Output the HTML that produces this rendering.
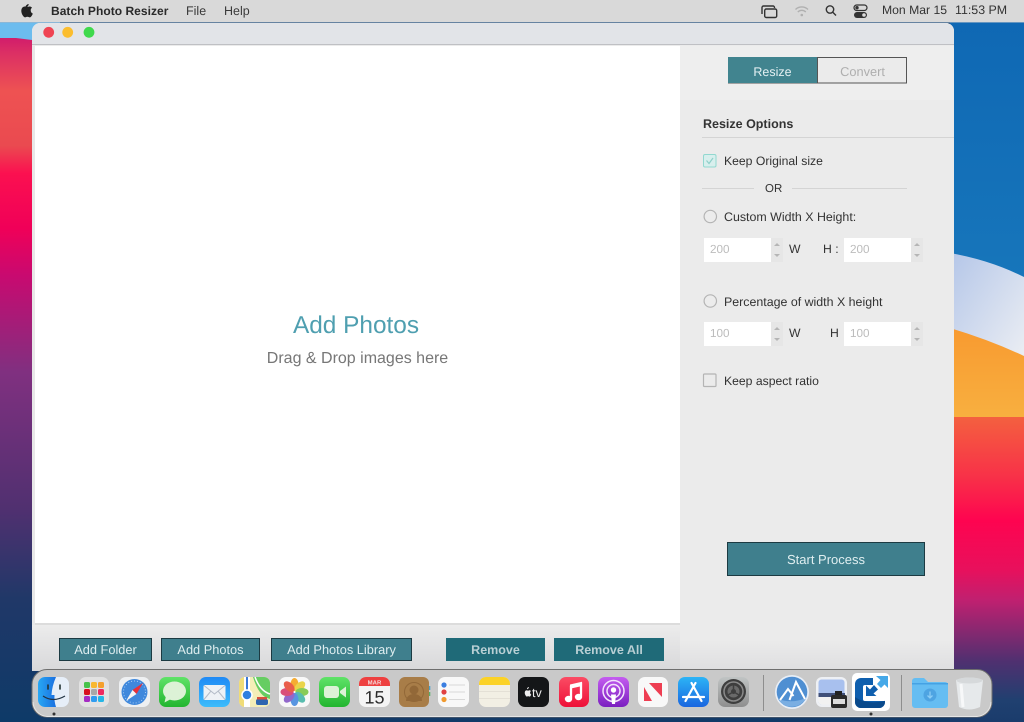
<!DOCTYPE html>
<html><head><meta charset="utf-8"><title>Batch Photo Resizer</title>
<style>
html,body{margin:0;padding:0;width:1024px;height:722px;overflow:hidden;background:#123a68}
body{position:relative;font-family:"Liberation Sans",sans-serif;color:#333;text-rendering:geometricPrecision}
#all{position:absolute;left:0;top:0;width:1024px;height:722px;filter:blur(.35px)}
.a{position:absolute}
.t{position:absolute;white-space:nowrap;font-size:12.2px;line-height:16px;color:#333}
.btn{position:absolute;box-sizing:border-box;background:#3f7f8d;border:1px solid #1c3a42;color:#dfeef0;font-size:12.8px;text-align:center;line-height:22px}
.rm{background:#1f6a78;border:1px solid #1f6a78;color:#b9cfd4;font-weight:bold;font-size:12.5px}
.inp{position:absolute;background:#fff;color:#bcbcbc;font-size:11.7px;line-height:23px;padding-left:6px;box-sizing:border-box;width:67px;height:24px}
.st{position:absolute;width:12px;height:24px;background:#e6e6e6}
.st:before,.st:after{content:"";position:absolute;left:3px;border-left:3px solid transparent;border-right:3px solid transparent}
.st:before{top:5px;border-bottom:3px solid #b5b5b5}
.st:after{bottom:5px;border-top:3px solid #b5b5b5}
.ln{position:absolute;height:1px;background:#d4d4d4}
</style></head><body><div id="all">

<svg class="a" style="left:0;top:0" width="1024" height="722" viewBox="0 0 1024 722">
<defs>
<linearGradient id="lw" x1="0" y1="0" x2="0" y2="1">
<stop offset="0" stop-color="#d01a6c"/><stop offset=".025" stop-color="#dc3064"/><stop offset=".08" stop-color="#ee5252"/><stop offset=".16" stop-color="#ea4a50"/><stop offset=".2" stop-color="#fb1050"/><stop offset=".28" stop-color="#f00058"/><stop offset=".35" stop-color="#c80a70"/><stop offset=".49" stop-color="#803080"/><stop offset=".69" stop-color="#503070"/><stop offset=".82" stop-color="#203868"/><stop offset="1" stop-color="#0e3a68"/>
</linearGradient>
<linearGradient id="rb" x1="0" y1="0" x2="0" y2="1"><stop offset="0" stop-color="#0f68b4"/><stop offset="1" stop-color="#1878bc"/></linearGradient>
<linearGradient id="rw" x1="0" y1="0" x2="1" y2="1"><stop offset="0" stop-color="#b4c6e8"/><stop offset="1" stop-color="#eef0f4"/></linearGradient>
<linearGradient id="ro" x1="0" y1="0" x2="0" y2="1"><stop offset="0" stop-color="#f89a30"/><stop offset="1" stop-color="#f8b040"/></linearGradient>
<linearGradient id="rr" x1="0" y1="0" x2="0" y2="1"><stop offset="0" stop-color="#f4603f"/><stop offset=".2" stop-color="#f83048"/><stop offset=".34" stop-color="#fe0450"/><stop offset=".5" stop-color="#e8105c"/><stop offset=".6" stop-color="#c02070"/><stop offset=".8" stop-color="#503070"/><stop offset=".93" stop-color="#204070"/><stop offset="1" stop-color="#1a3c6c"/></linearGradient>
<linearGradient id="fin" x1="0" y1="0" x2="1" y2="0"><stop offset="0" stop-color="#28a8f4"/><stop offset="1" stop-color="#1a6fe0"/></linearGradient>
<linearGradient id="mus" x1="0" y1="0" x2="0" y2="1"><stop offset="0" stop-color="#fb4c64"/><stop offset="1" stop-color="#ee1038"/></linearGradient>
<linearGradient id="pod" x1="0" y1="0" x2="0" y2="1"><stop offset="0" stop-color="#c45cf0"/><stop offset="1" stop-color="#7a1fc0"/></linearGradient>
<linearGradient id="gr" x1="0" y1="0" x2="0" y2="1"><stop offset="0" stop-color="#5fe368"/><stop offset="1" stop-color="#22b52f"/></linearGradient>
<linearGradient id="ml" x1="0" y1="0" x2="0" y2="1"><stop offset="0" stop-color="#1f8af5"/><stop offset="1" stop-color="#3cbcfb"/></linearGradient>
<linearGradient id="as" x1="0" y1="0" x2="0" y2="1"><stop offset="0" stop-color="#2cb4f6"/><stop offset="1" stop-color="#1a66e0"/></linearGradient>
<linearGradient id="bar" x1="0" y1="0" x2="0" y2="1"><stop offset="0" stop-color="#ececec"/><stop offset="1" stop-color="#d8d8da"/></linearGradient>
<linearGradient id="sb" x1="0" y1="0" x2="0" y2="1"><stop offset="0" stop-color="#ebebeb"/><stop offset="1" stop-color="#dedee0"/></linearGradient>
<linearGradient id="prf" x1="0" y1="0" x2="0" y2="1"><stop offset="0" stop-color="#c0c4c4"/><stop offset="1" stop-color="#8e8e8e"/></linearGradient>
</defs>
<!-- wallpaper -->
<rect width="1024" height="722" fill="#123a68"/>
<rect x="0" y="36" width="40" height="686" fill="url(#lw)"/>
<rect x="0" y="20" width="60" height="18" fill="#6cbcee"/>
<path d="M0 36 L32 40 V36Z" fill="#6cbcee"/>
<rect x="950" y="20" width="74" height="300" fill="url(#rb)"/>
<path d="M950 253Q990 260 1024 277V370L950 335Z" fill="url(#rw)"/>
<path d="M950 328Q990 340 1024 356V420H950Z" fill="url(#ro)"/>
<path d="M950 417H1024V722H950Z" fill="url(#rr)"/>

<!-- window -->
<path d="M32 671V31a8 8 0 0 1 8-8H946a8 8 0 0 1 8 8V671Z" fill="#ebebeb"/>
<path d="M32 44V31a8 8 0 0 1 8-8H946a8 8 0 0 1 8 8V44Z" fill="#e2e4e8"/>
<rect x="32" y="44" width="922" height="1" fill="#bfc0c4"/>
<rect x="32" y="45" width="3" height="580" fill="#e8e8e8"/>
<rect x="35" y="46" width="645" height="577" fill="#fff"/>
<rect x="35" y="623" width="645" height="2" fill="#dcdcdc"/>
<rect x="680" y="46" width="274" height="54" fill="#eeeeee"/>
<rect x="680" y="640" width="274" height="31" fill="url(#sb)"/>
<rect x="32" y="625" width="648" height="46" fill="url(#bar)"/>
<circle cx="48.700" cy="32.300" r="5.400" fill="#ef4453"/>
<circle cx="67.700" cy="32.300" r="5.400" fill="#fbbd2e"/>
<circle cx="89" cy="32.300" r="5.400" fill="#3fd94c"/>

<!-- menu bar -->
<rect width="1024" height="22" fill="#d9d9d9"/>
<rect y="22" width="1024" height="1" fill="#9fb4c8" opacity=".6"/>
<g transform="translate(6.800 .8) scale(.8)">
<path d="M25.800 7.400c.9-1 1.700-2.200 1.500-3.400-1.200.1-2.500.9-3.200 1.900-.6.8-1.100 2-.9 3.100 1.200.1 1.900-.6 2.600-1.600zM29.900 11.700c0-2 1.600-2.900 1.700-3-1-1.400-2.400-1.600-3-1.600-1.300-.1-2.300.7-3.100.7-.8 0-1.800-.7-2.900-.7-1.500 0-3 .9-3.700 2.200-1.600 2.800-.4 6.900 1.100 9.100.8 1.100 1.600 2.300 2.800 2.300 1.100 0 1.500-.7 2.900-.7 1.300 0 1.700.7 2.900.7 1.200 0 1.900-1.100 2.700-2.200.8-1.200 1.200-2.400 1.200-2.500-.1 0-2.600-1-2.600-4z" fill="#222"/>
</g>
<g fill="none" stroke="#333" stroke-width="1.400">
<path d="M762 14V7.500a1.500 1.500 0 0 1 1.500-1.500H773a1.500 1.500 0 0 1 1.500 1.500V8"/>
<rect x="764.700" y="9" width="12" height="8.500" rx="1.500"/>
<path d="M795.500 9.500a9 9 0 0 1 12.500 0M797.800 12a5.500 5.500 0 0 1 8 0" stroke="#b0b0b0"/>
<circle cx="830" cy="9.500" r="3.700"/><path d="M832.800 12.300L836 15.500"/>
</g>
<circle cx="801.800" cy="15" r="1.300" fill="#b0b0b0"/>
<rect x="854" y="5" width="13" height="5.500" rx="2.700" fill="none" stroke="#333" stroke-width="1.200"/>
<circle cx="857" cy="7.700" r="1.700" fill="#333"/>
<rect x="854" y="12" width="13" height="6" rx="3" fill="#333"/>
<circle cx="864" cy="15" r="1.800" fill="#ddd"/>

<!-- Resize / Convert -->
<rect x="728.500" y="57.500" width="178" height="25.500" fill="#ebebeb" stroke="#555"/>
<rect x="728" y="57" width="89" height="26" fill="#41848f"/>
<rect x="817" y="57" width="1" height="26" fill="#555"/>

<!-- checkbox / radios -->
<rect x="703.500" y="154.500" width="12.500" height="12.500" rx="1.500" fill="#d8efed" stroke="#92d8d0"/>
<path d="M706.500 160.500l2.500 3 4-5.500" fill="none" stroke="#8fd0ca" stroke-width="1.200"/>
<circle cx="710.300" cy="216.500" r="6.200" fill="#ececec" stroke="#b4b4b4" stroke-width="1.200"/>
<circle cx="710.300" cy="301" r="6.200" fill="#ececec" stroke="#b4b4b4" stroke-width="1.200"/>
<rect x="703.500" y="374" width="12.500" height="12.500" rx="1" fill="#ebebeb" stroke="#b4b4b4" stroke-width="1.200"/>

<!-- dock -->
<rect x="32" y="669.500" width="960" height="47.500" rx="15" fill="#c9c9c9" stroke="#6e6e6e" stroke-width="1"/>
<path d="M33 702a15 15 0 0 0 14 14.500H977a15 15 0 0 0 14-14.500" fill="none" stroke="#e6e6e6" stroke-width="1"/>
<rect x="763" y="675" width="1" height="36" fill="#8e8e8e"/>
<rect x="901" y="675" width="1" height="36" fill="#8e8e8e"/>
<circle cx="54" cy="714" r="1.500" fill="#333"/>
<circle cx="871" cy="714" r="1.500" fill="#333"/>

<!-- Finder -->
<g transform="translate(38 677)">
<rect width="31" height="30" rx="7" fill="#e6eef8"/>
<path d="M7 0H18Q14 9 13.500 18H16.500Q16 24 18 30H7a7 7 0 0 1-7-7V7a7 7 0 0 1 7-7z" fill="url(#fin)"/>
<path d="M10 8v4M22 8v4" stroke="#233" stroke-width="1.600" stroke-linecap="round"/>
<path d="M5 19Q15 26 27 19" stroke="#234" stroke-width="1.200" fill="none"/>
</g>
<!-- Launchpad -->
<g transform="translate(79 677)">
<rect width="30" height="30" rx="7" fill="#e2e2e2"/>
<rect x="5" y="5" width="6" height="6" rx="1.500" fill="#48c24a"/><rect x="12" y="5" width="6" height="6" rx="1.500" fill="#f8b830"/><rect x="19" y="5" width="6" height="6" rx="1.500" fill="#f5a02c"/>
<rect x="5" y="12" width="6" height="6" rx="1.500" fill="#d81020"/><rect x="12" y="12" width="6" height="6" rx="1.500" fill="#a8a8a8"/><rect x="19" y="12" width="6" height="6" rx="1.500" fill="#ee2a60"/>
<rect x="5" y="19" width="6" height="6" rx="1.500" fill="#a52bc4"/><rect x="12" y="19" width="6" height="6" rx="1.500" fill="#2f9cf0"/><rect x="19" y="19" width="6" height="6" rx="1.500" fill="#25b6e6"/>
</g>
<!-- Safari -->
<g transform="translate(119 677)">
<rect width="31" height="30" rx="7" fill="#eef0f2"/>
<circle cx="15.500" cy="15" r="13" fill="#3f88dc"/>
<circle cx="15.500" cy="15" r="11" fill="none" stroke="#a8cdf3" stroke-width="1" stroke-dasharray="1 2"/>
<path d="M24 6L13.500 13 17.500 17z" fill="#e8303a"/><path d="M7 24L13.500 13 17.500 17z" fill="#f4f4f4"/>
</g>
<!-- Messages -->
<g transform="translate(159 677)">
<rect width="31" height="30" rx="7" fill="url(#gr)"/>
<ellipse cx="15.500" cy="14" rx="11.500" ry="9.500" fill="#dcf2d6"/>
<path d="M7 19L5.500 25.500 12 22z" fill="#dcf2d6"/>
</g>
<!-- Mail -->
<g transform="translate(199 677)">
<rect width="31" height="30" rx="7" fill="url(#ml)"/>
<rect x="4.500" y="8" width="22" height="15" rx="1.500" fill="#eef2f6"/>
<path d="M5 8.500L15.500 17 26 8.500M5 22.500L12 14M26 22.500L19 14" fill="none" stroke="#b4bcc8" stroke-width="1"/>
</g>
<!-- Maps -->
<g transform="translate(239 677)">
<rect width="31" height="30" rx="6" fill="#f4eeb8"/>
<path d="M14 0H25a6 6 0 0 1 6 6V22Q20 20 14 0z" fill="#66cd62"/>
<path d="M16 0Q21 14 31 17" fill="none" stroke="#fff" stroke-width="1.500"/>
<path d="M0 6a6 6 0 0 1 6-6H7V30H6a6 6 0 0 1-6-6z" fill="#f0dc78"/>
<path d="M5 0h6v30h-6z" fill="#fff"/><path d="M7 0h2v14h-2z" fill="#3a78d8"/>
<circle cx="8" cy="18" r="5" fill="#2f7fe0" stroke="#fff" stroke-width="1.500"/>
<rect x="17" y="22" width="12" height="6" rx="2" fill="#2f66b0"/><rect x="18" y="20" width="10" height="2.500" fill="#d8503c"/>
</g>
<!-- Photos -->
<g transform="translate(279 677)">
<rect width="31" height="30" rx="7" fill="#f8f8f8"/>
<g transform="translate(15.500 15)" opacity=".92">
<ellipse cy="-7.500" rx="4" ry="6.500" fill="#f5a623"/>
<ellipse cy="-7.500" rx="4" ry="6.500" fill="#e9d13c" transform="rotate(45)"/>
<ellipse cy="-7.500" rx="4" ry="6.500" fill="#7fc84a" transform="rotate(90)"/>
<ellipse cy="-7.500" rx="4" ry="6.500" fill="#4ab7a8" transform="rotate(135)"/>
<ellipse cy="-7.500" rx="4" ry="6.500" fill="#4a8de0" transform="rotate(180)"/>
<ellipse cy="-7.500" rx="4" ry="6.500" fill="#8a5cc8" transform="rotate(225)"/>
<ellipse cy="-7.500" rx="4" ry="6.500" fill="#d8406e" transform="rotate(270)"/>
<ellipse cy="-7.500" rx="4" ry="6.500" fill="#e8503c" transform="rotate(315)"/>
</g></g>
<!-- FaceTime -->
<g transform="translate(319 677)">
<rect width="31" height="30" rx="7" fill="url(#gr)"/>
<rect x="5" y="9" width="15" height="12" rx="3" fill="#dcf2d6"/>
<path d="M21 14L27 9.500V20.500L21 16z" fill="#dcf2d6"/>
</g>
<!-- Calendar -->
<g transform="translate(359 677)">
<rect width="31" height="30" rx="7" fill="#f4f4f4"/>
<path d="M0 9V7a7 7 0 0 1 7-7H24a7 7 0 0 1 7 7V9z" fill="#ee4040"/>
<text x="15.500" y="7.300" font-size="6" font-weight="bold" text-anchor="middle" fill="#f4d8d8" font-family="Liberation Sans">MAR</text>
<text x="15.500" y="26.500" font-size="18" text-anchor="middle" fill="#2a2a2a" font-family="Liberation Sans">15</text>
</g>
<!-- Contacts -->
<g transform="translate(399 677)">
<rect width="30" height="30" rx="6" fill="#a87d48"/>
<circle cx="15" cy="13" r="4.500" fill="#926838"/>
<path d="M7 24a8 7 0 0 1 16 0z" fill="#926838"/>
<circle cx="15" cy="15" r="9.500" fill="none" stroke="#926838" stroke-width="1"/>
<rect x="30" y="9" width="1.300" height="4" fill="#4aa0c8"/><rect x="30" y="15" width="1.300" height="4" fill="#5ab06a"/>
</g>
<!-- Reminders -->
<g transform="translate(438 677)">
<rect width="31" height="30" rx="7" fill="#f8f8f8"/>
<circle cx="6" cy="8" r="2.600" fill="#3a7ee0"/><circle cx="6" cy="15" r="2.600" fill="#e04040"/><circle cx="6" cy="22.500" r="2.600" fill="#f09a30"/>
<path d="M11 8h16M11 15h16M11 22.500h16" stroke="#d8d8d8" stroke-width="1"/>
</g>
<!-- Notes -->
<g transform="translate(479 677)">
<rect width="31" height="30" rx="7" fill="#f2efe4"/>
<path d="M0 8V7a7 7 0 0 1 7-7H24a7 7 0 0 1 7 7V8z" fill="#fbd227"/>
<path d="M0 14.500h31M0 21.500h31" stroke="#e4e0d6" stroke-width="1"/>
</g>
<!-- TV -->
<g transform="translate(518 677)">
<rect width="31" height="30" rx="7" fill="#141618"/>
<path d="M10.300 11.500c.4-.5.700-1 .6-1.500-.5 0-1.100.4-1.400.8-.3.400-.5.900-.4 1.400.5 0 .9-.3 1.200-.7zM12.100 15.600c0-1 .8-1.400.8-1.500-.5-.7-1.100-.8-1.400-.8-.6 0-1.100.4-1.400.4-.4 0-.8-.4-1.300-.4-.7 0-1.400.4-1.700 1-.7 1.300-.2 3.200.5 4.200.4.500.8 1.100 1.300 1.100.5 0 .7-.3 1.300-.3.600 0 .8.300 1.300.3.500 0 .9-.5 1.200-1 .4-.6.500-1.100.5-1.100 0 0-1.100-.5-1.100-1.900z" fill="#eee"/>
<text x="14" y="20" font-size="12.500" fill="#eee" font-family="Liberation Sans">tv</text>
</g>
<!-- Music -->
<g transform="translate(559 677)">
<rect width="30" height="30" rx="7" fill="url(#mus)"/>
<path d="M12 21V9.500L22 7V19" fill="none" stroke="#fff" stroke-width="2.300"/>
<path d="M11 7.500L23 4.800V9L11 11.700z" fill="#fff"/>
<ellipse cx="9.500" cy="22" rx="3.700" ry="3.200" fill="#fff"/><ellipse cx="19.500" cy="20" rx="3.700" ry="3.200" fill="#fff"/>
</g>
<!-- Podcasts -->
<g transform="translate(598 677)">
<rect width="31" height="30" rx="7" fill="url(#pod)"/>
<circle cx="15.500" cy="14" r="10.500" fill="none" stroke="#f3e4fb" stroke-width="1.500"/>
<circle cx="15.500" cy="14" r="6.500" fill="none" stroke="#f3e4fb" stroke-width="1.500"/>
<circle cx="15.500" cy="13" r="2.700" fill="#fff"/>
<path d="M13 17.500h5l-1 9.500h-3z" fill="#fff"/>
</g>
<!-- News -->
<g transform="translate(638 677)">
<rect width="30" height="30" rx="7" fill="#f8f8f8"/>
<path d="M6 10v14h8zM11 6h13v14z" fill="#ee3e52"/>
</g>
<!-- App Store -->
<g transform="translate(678 677)">
<rect width="31" height="30" rx="7" fill="url(#as)"/>
<path d="M13.500 6L23.500 24M17.500 6L7.500 24M5 20H26" stroke="#fff" stroke-width="2.200" stroke-linecap="round" fill="none"/>
</g>
<!-- Prefs -->
<g transform="translate(718 677)">
<rect width="31" height="30" rx="7" fill="url(#prf)"/>
<circle cx="15.500" cy="14.500" r="12.500" fill="#3e3e3e"/>
<circle cx="15.500" cy="14.500" r="9.500" fill="none" stroke="#8a8a8a" stroke-width="1.500"/>
<circle cx="15.500" cy="14.500" r="6" fill="#6a6a6a"/>
<circle cx="15.500" cy="14.500" r="2.500" fill="#3e3e3e"/>
<path d="M15.500 12L15.500 6M13.500 16L8 19M17.500 16L23 19" stroke="#3e3e3e" stroke-width="1.500"/>
</g>
<!-- Mountain -->
<g transform="translate(775 675)">
<circle cx="17" cy="17" r="17" fill="#e8eef6"/>
<circle cx="17" cy="17" r="15.300" fill="#4f8fd2"/>
<path d="M3 24Q17 29 31 23A16 16 0 0 1 3 24z" fill="#7aaee2"/>
<path d="M5 25L13 14 18.500 21M14.500 25L21 7 30 24" fill="none" stroke="#fff" stroke-width="2"/>
</g>
<!-- Preview-like -->
<g transform="translate(816 677)">
<rect width="31" height="30" rx="6" fill="#eef0f4"/>
<rect x="2.500" y="2.500" width="26" height="25" rx="3" fill="#a8c0ee"/>
<path d="M2.500 16H29V21H2.500z" fill="#40507a"/>
<path d="M2.500 20H16V27.500H5.500a3 3 0 0 1-3-3z" fill="#f2f2f2"/>
<rect x="19" y="14" width="7" height="4" fill="#222"/>
<rect x="15" y="18" width="16" height="13" rx="2" fill="#2a2a2a"/><rect x="17" y="22" width="12" height="5" fill="#dcdcdc"/>
</g>
<!-- Resizer -->
<g transform="translate(852 673)">
<rect width="38" height="38" rx="5" fill="#fff"/>
<rect x="3" y="5" width="30" height="30" rx="6" fill="#0f5fae"/>
<path d="M3 24Q14 32 33 28V29a6 6 0 0 1-6 6H9a6 6 0 0 1-6-6z" fill="#0a4a8c"/>
<rect x="11" y="12" width="23" height="16" rx="2" fill="#fff"/>
<rect x="21" y="2" width="16" height="12" fill="#fff"/>
<path d="M14 12.500L18 16.500 22 12 26 16.500 21.500 20.500 24.500 23H14z" fill="#0f5fae"/>
<path d="M24 3H36V15L32.500 11.500 29 15 25 11 28.500 7z" fill="#45a8e8"/>
</g>
<!-- Folder -->
<g transform="translate(912 678)">
<path d="M0 3a3 3 0 0 1 3-3H12L16 4H33a3 3 0 0 1 3 3V27a3 3 0 0 1-3 3H3a3 3 0 0 1-3-3z" fill="#65bdf2"/>
<rect x="0" y="5" width="36" height="1.500" fill="#45a2e4"/>
<circle cx="18" cy="17" r="6.500" fill="#4ea4e2"/>
<path d="M18 13.500v6.500M15.500 17.500L18 20l2.500-2.500" stroke="#8ccdf5" fill="none" stroke-width="1.300"/>
</g>
<!-- Trash -->
<g transform="translate(955 676)">
<path d="M1 4Q14 -1 28 4L25 31Q14 36 4 31z" fill="#e6e9eb"/>
<ellipse cx="14.500" cy="4.500" rx="13" ry="3" fill="#d6d9db"/>
<path d="M6 8L8 31" stroke="#fff" stroke-width="3" opacity=".7"/>
</g>
</svg>

<!-- menu text -->
<div class="t" style="left:51px;top:3px;font-weight:bold;font-size:12px;letter-spacing:.04px;color:#2a2a2a">Batch Photo Resizer</div>
<div class="t" style="left:186px;top:3px;color:#3a3a3a;font-size:12.500px">File</div>
<div class="t" style="left:224px;top:3px;color:#3a3a3a;font-size:12.500px">Help</div>
<div class="t" style="left:882px;top:2px;color:#333">Mon Mar 15</div>
<div class="t" style="left:955px;top:2px;color:#333;font-size:12.400px">11:53 PM</div>

<!-- main text -->
<div class="t" style="left:35px;width:642px;top:311px;text-align:center;font-size:24.400px;line-height:30px;color:#4f9fb0">Add Photos</div>
<div class="t" style="left:35px;width:645px;top:350px;text-align:center;font-size:16px;line-height:18px;color:#777">Drag &amp; Drop images here</div>

<!-- tabs -->
<div class="t" style="left:728px;width:89px;top:64px;text-align:center;color:#e4f0f2;font-size:12.500px">Resize</div>
<div class="t" style="left:818px;width:89px;top:64px;text-align:center;color:#aeaeae;font-size:12.800px">Convert</div>

<!-- options -->
<div class="t" style="left:703px;top:116px;font-weight:bold;font-size:12.500px;color:#333">Resize Options</div>
<div class="ln" style="left:702px;top:137px;width:252px"></div>
<div class="t" style="left:724px;top:153px">Keep Original size</div>
<div class="ln" style="left:702px;top:188px;width:52px"></div>
<div class="t" style="left:765px;top:181px;font-size:11.500px">OR</div>
<div class="ln" style="left:792px;top:188px;width:115px"></div>
<div class="t" style="left:724px;top:209px;font-size:12.400px">Custom Width X Height:</div>
<div class="inp" style="left:704px;top:238px">200</div><div class="st" style="left:771px;top:238px"></div>
<div class="t" style="left:789px;top:241px">W</div>
<div class="t" style="left:823px;top:241px">H :</div>
<div class="inp" style="left:844px;top:238px">200</div><div class="st" style="left:911px;top:238px"></div>
<div class="t" style="left:724px;top:294px;font-size:12.400px">Percentage of width X height</div>
<div class="inp" style="left:704px;top:322px">100</div><div class="st" style="left:771px;top:322px"></div>
<div class="t" style="left:789px;top:325px">W</div>
<div class="t" style="left:830px;top:325px">H</div>
<div class="inp" style="left:844px;top:322px">100</div><div class="st" style="left:911px;top:322px"></div>
<div class="t" style="left:724px;top:373px">Keep aspect ratio</div>

<div class="btn" style="left:727px;top:542px;width:198px;height:34px;line-height:34px;font-size:13px">Start Process</div>

<div class="btn" style="left:59px;top:638px;width:93px;height:23px">Add Folder</div>
<div class="btn" style="left:161px;top:638px;width:99px;height:23px">Add Photos</div>
<div class="btn" style="left:271px;top:638px;width:141px;height:23px">Add Photos Library</div>
<div class="btn rm" style="left:446px;top:638px;width:99px;height:23px">Remove</div>
<div class="btn rm" style="left:554px;top:638px;width:110px;height:23px">Remove All</div>
</div></body></html>
